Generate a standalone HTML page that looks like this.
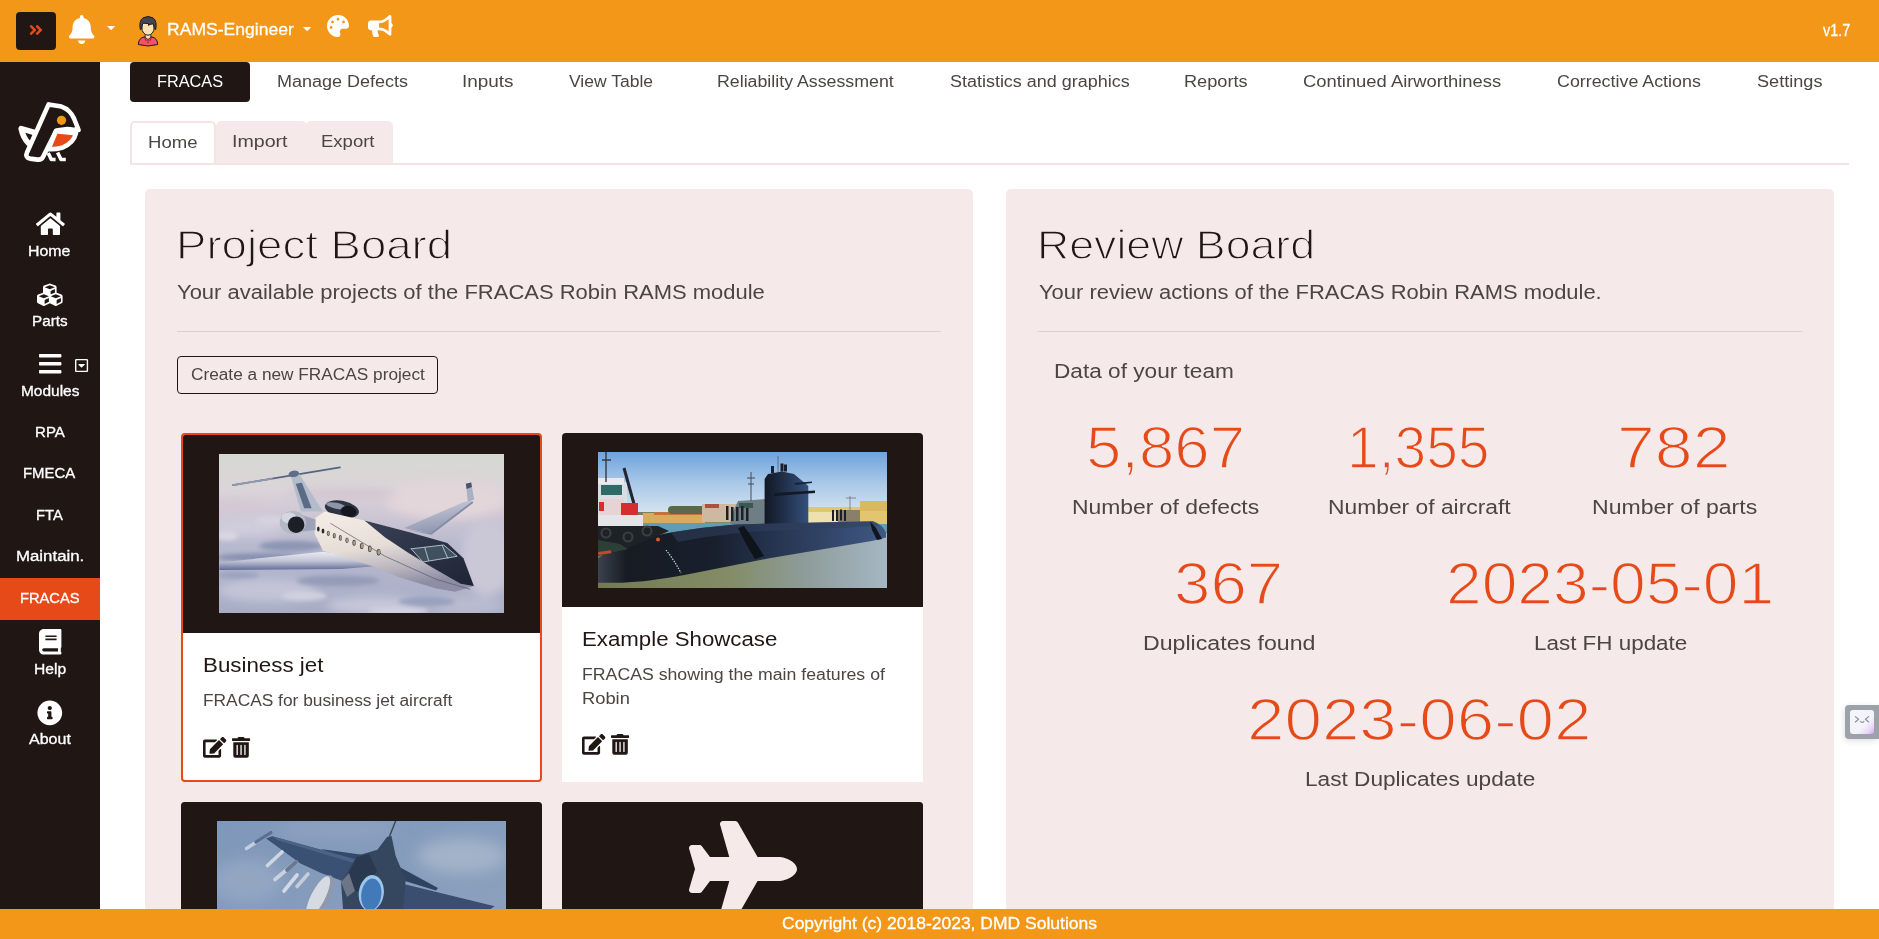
<!DOCTYPE html><html><head><meta charset="utf-8"><title>Robin RAMS - FRACAS</title><style>

html,body{margin:0;padding:0;}
body{width:1879px;height:939px;overflow:hidden;position:relative;background:#fff;font-family:"Liberation Sans",sans-serif;}
.t{position:absolute;white-space:nowrap;line-height:1;transform-origin:0 0;display:block;}
.b{position:absolute;box-sizing:border-box;}
svg{display:block;overflow:visible}

</style></head><body>
<div class="b" style="left:130px;top:62px;width:120px;height:39.7px;background:#201613;border-radius:4px"></div>
<span class="t" id="t0" style="left:156.88px;top:74.00px;font-size:16px;color:#fff;font-weight:400;transform:scaleX(1.0186)">FRACAS</span>
<span class="t" id="t1" style="left:276.68px;top:74.00px;font-size:16px;color:#4b4543;font-weight:400;transform:scaleX(1.1246)">Manage Defects</span>
<span class="t" id="t2" style="left:462.22px;top:74.00px;font-size:16px;color:#4b4543;font-weight:400;transform:scaleX(1.1835)">Inputs</span>
<span class="t" id="t3" style="left:569.00px;top:74.00px;font-size:16px;color:#4b4543;font-weight:400;transform:scaleX(1.0947)">View Table</span>
<span class="t" id="t4" style="left:716.79px;top:74.00px;font-size:16px;color:#4b4543;font-weight:400;transform:scaleX(1.1102)">Reliability Assessment</span>
<span class="t" id="t5" style="left:950.30px;top:74.00px;font-size:16px;color:#4b4543;font-weight:400;transform:scaleX(1.1220)">Statistics and graphics</span>
<span class="t" id="t6" style="left:1183.96px;top:74.00px;font-size:16px;color:#4b4543;font-weight:400;transform:scaleX(1.1359)">Reports</span>
<span class="t" id="t7" style="left:1302.50px;top:74.00px;font-size:16px;color:#4b4543;font-weight:400;transform:scaleX(1.1486)">Continued Airworthiness</span>
<span class="t" id="t8" style="left:1556.50px;top:74.00px;font-size:16px;color:#4b4543;font-weight:400;transform:scaleX(1.1154)">Corrective Actions</span>
<span class="t" id="t9" style="left:1756.50px;top:74.00px;font-size:16px;color:#4b4543;font-weight:400;transform:scaleX(1.1330)">Settings</span>
<div class="b" style="left:215.5px;top:121px;width:91px;height:42px;background:#F5E9E9;border-radius:5px 5px 0 0"></div>
<div class="b" style="left:306px;top:121px;width:87px;height:42px;background:#F5E9E9;border-radius:5px 5px 0 0"></div>
<div class="b" style="left:130px;top:121px;width:85.5px;height:44px;background:#fff;border:2px solid #F6E4E4;border-radius:5px 5px 0 0"></div>
<div class="b" style="left:130px;top:163px;width:1719px;height:2px;background:#F6E4E4"></div>
<span class="t" id="t10" style="left:147.84px;top:135.00px;font-size:16px;color:#4b4543;font-weight:400;transform:scaleX(1.1584)">Home</span>
<span class="t" id="t11" style="left:231.78px;top:134.00px;font-size:16px;color:#4b4543;font-weight:400;transform:scaleX(1.2250)">Import</span>
<span class="t" id="t12" style="left:320.84px;top:134.00px;font-size:16px;color:#4b4543;font-weight:400;transform:scaleX(1.1573)">Export</span>
<div class="b" style="left:145px;top:189px;width:828px;height:720px;background:#F5E9E9;border-radius:5px 5px 0 0"></div>
<div class="b" style="left:1006px;top:189px;width:828px;height:720px;background:#F5E9E9;border-radius:5px 5px 0 0"></div>
<span class="t" id="t13" style="left:176.00px;top:225.00px;font-size:40px;color:#201613;font-weight:400;-webkit-text-stroke:1.3px #F5E9E9;transform:scaleX(1.1395)">Project Board</span>
<span class="t" id="t14" style="left:177.30px;top:282.00px;font-size:20px;color:#4b4543;font-weight:400;transform:scaleX(1.0986)">Your available projects of the FRACAS Robin RAMS module</span>
<div class="b" style="left:177px;top:331px;width:764px;height:1px;background:#dcd0d0"></div>
<div class="b" style="left:177px;top:356px;width:261px;height:37.5px;border:1px solid #201613;border-radius:4px"></div>
<span class="t" id="t15" style="left:190.50px;top:367.00px;font-size:16px;color:#4b4543;font-weight:400;transform:scaleX(1.0775)">Create a new FRACAS project</span>
<div class="b" style="left:181px;top:433px;width:361px;height:349px;background:#fff;border:2px solid #E64A19;border-radius:4px;overflow:hidden"><div class="b" style="left:0;top:0;width:357px;height:198px;background:#201613"></div></div>
<div class="b" style="left:219px;top:454px;width:285px;height:159px;overflow:hidden"><svg width="285" height="159" viewBox="0 0 285 159"><defs><linearGradient id="jsky" x1="0" y1="0" x2="0" y2="1"><stop offset="0" stop-color="#d6d9d3"/><stop offset=".22" stop-color="#dbd4d8"/><stop offset=".38" stop-color="#cfc7d4"/><stop offset=".58" stop-color="#b7b9ce"/><stop offset="1" stop-color="#a8adc6"/></linearGradient><linearGradient id="jfus" x1="0" y1="0" x2=".3" y2="1"><stop offset="0" stop-color="#f6eee6"/><stop offset=".5" stop-color="#e6ddd7"/><stop offset=".8" stop-color="#b7b2bd"/><stop offset="1" stop-color="#8d8da5"/></linearGradient><linearGradient id="jwing" x1="0" y1="0" x2="0" y2="1"><stop offset="0" stop-color="#eceaf2"/><stop offset=".5" stop-color="#c3c5d6"/><stop offset="1" stop-color="#636e98"/></linearGradient><linearGradient id="jrw" x1="0" y1="0" x2=".3" y2="1"><stop offset="0" stop-color="#cfd0dc"/><stop offset="1" stop-color="#9097b1"/></linearGradient><linearGradient id="jnavy" x1="0" y1="0" x2="1" y2="1"><stop offset="0" stop-color="#3a4156"/><stop offset="1" stop-color="#1f2435"/></linearGradient><filter id="jb6" x="-40%" y="-40%" width="180%" height="180%"><feGaussianBlur stdDeviation="5"/></filter><filter id="jb2" x="-40%" y="-40%" width="180%" height="180%"><feGaussianBlur stdDeviation="2.2"/></filter></defs><rect width="285" height="159" fill="url(#jsky)"/><g filter="url(#jb6)"><ellipse cx="226.5" cy="45.8" rx="60.3" ry="18.8" fill="#e3d6da"/><ellipse cx="15.5" cy="53.3" rx="28.3" ry="5.7" fill="#d4c7d3"/><ellipse cx="122.9" cy="40.1" rx="56.5" ry="5.7" fill="#d3c6d2"/><ellipse cx="28.6" cy="72.2" rx="35.8" ry="9.4" fill="#d0cddc"/><ellipse cx="268.0" cy="104.2" rx="26.4" ry="37.7" fill="#cac7d7"/><ellipse cx="47.5" cy="136.3" rx="49.0" ry="11.3" fill="#c3c5d7"/><ellipse cx="156.8" cy="151.3" rx="49.0" ry="8.5" fill="#c6c8d9"/><ellipse cx="245.4" cy="151.3" rx="37.7" ry="9.4" fill="#b9bccf"/></g><g filter="url(#jb2)"><ellipse cx="72.0" cy="92.0" rx="32.0" ry="5.3" fill="#8d96b4"/><ellipse cx="40.0" cy="103.3" rx="43.3" ry="4.1" fill="#8791b0"/><ellipse cx="119.1" cy="126.8" rx="41.5" ry="5.3" fill="#949bb8"/><ellipse cx="207.7" cy="147.6" rx="28.3" ry="4.9" fill="#9aa1bd"/><ellipse cx="19.2" cy="121.2" rx="20.7" ry="3.4" fill="#9aa1bd"/><ellipse cx="7.9" cy="81.6" rx="11.3" ry="4.7" fill="#dad6e2"/><ellipse cx="53.1" cy="66.5" rx="17.0" ry="4.7" fill="#d6d2df"/><ellipse cx="85.2" cy="141.9" rx="22.6" ry="4.7" fill="#d0d1df"/><ellipse cx="179.4" cy="157.0" rx="30.2" ry="3.8" fill="#d2d3e0"/></g><polygon points="185.1,74.1 245.4,47.7 253.3,47.3 210.5,79.2" fill="url(#jrw)"/><polygon points="187.0,75.4 210.5,79.2 253.3,47.3 254.4,48.8 212.4,80.7" fill="#858ca8"/><polygon points="246.9,29.8 252.2,28.5 255.2,45.4 248.8,48.1" fill="#aab1c5"/><polygon points="246.9,29.8 252.2,28.5 252.9,33.0 247.6,34.9" fill="#48546e"/><path d="M13.9,31.1 L121.0,13.4" stroke="#56647e" stroke-width="1.6" fill="none" stroke-linecap="round"/><path d="M13.9,31.1 L53.1,24.7" stroke="#8e9ab0" stroke-width="1.6" fill="none" stroke-linecap="round"/><polygon points="71.6,21.3 79.9,19.4 104.0,57.5 81.8,57.5" fill="#b3bccb"/><polygon points="76.7,29.8 82.9,28.8 92.7,54.3 85.2,54.3" fill="#5b6a85"/><ellipse cx="74.8" cy="19.8" rx="5.3" ry="3.2" fill="#5f6e86" transform="rotate(-10 74.8 19.8)"/><ellipse cx="122.9" cy="55.2" rx="17.3" ry="8.3" fill="#2e3342" transform="rotate(12 122.9 55.2)"/><ellipse cx="117.2" cy="51.8" rx="10.4" ry="3.0" fill="#8d95a8" transform="rotate(12 117.2 51.8)"/><ellipse cx="129.5" cy="57.5" rx="7.9" ry="5.7" fill="#15171f" transform="rotate(12 129.5 57.5)"/><polygon points="0.4,108.4 104.0,97.8 134.2,101.4 160.6,111.8 122.9,115.0 0.4,115.9" fill="url(#jwing)"/><polygon points="96.5,63.7 105.9,57.5 145.5,66.5 190.7,78.2 228.4,89.1 244.4,104.2 254.8,132.1 236.0,137.8 217.1,134.4 179.4,123.1 154.9,112.7 122.9,102.3 104.0,96.7 95.6,79.7" fill="url(#jfus)"/><polygon points="145.5,66.5 190.7,78.2 228.4,89.1 244.4,104.2 254.8,132.1 241.6,129.7 213.3,113.6 188.8,98.6 166.2,83.5" fill="url(#jnavy)"/><polygon points="192.2,94.8 224.7,91.0 238.2,102.3 203.9,108.0" fill="#41505f"/><path d="M192.2,94.8 L224.7,91.0 L238.2,102.3 L203.9,108.0 L192.2,94.8" stroke="#b9c9d2" stroke-width="0.9" fill="none" stroke-linecap="round"/><path d="M205.8,93.5 L209.6,106.5" stroke="#b9c9d2" stroke-width="0.9" fill="none" stroke-linecap="round"/><path d="M223.1,91.4 L228.8,104.2" stroke="#b9c9d2" stroke-width="0.9" fill="none" stroke-linecap="round"/><path d="M111.6,69.4 L166.2,102.3 L217.1,125.3 L251.0,135.3" stroke="#5f5c66" stroke-width="0.7" fill="none" stroke-linecap="round"/><polygon points="79.5,59.9 96.5,65.6 96.5,76.0 81.4,77.8" fill="#9da3b6"/><ellipse cx="73.9" cy="68.4" rx="13.2" ry="11.3" fill="#b4b9c8"/><ellipse cx="70.1" cy="63.7" rx="7.5" ry="5.3" fill="#d5d7e0"/><ellipse cx="77.1" cy="70.7" rx="8.3" ry="8.3" fill="#1d1f28"/><ellipse cx="99.3" cy="75.0" rx="1.3" ry="2.5" fill="#26262c"/><ellipse cx="104.0" cy="76.9" rx="1.4" ry="2.5" fill="#26262c"/><ellipse cx="109.3" cy="79.3" rx="1.5" ry="2.6" fill="#3b3a3e"/><ellipse cx="109.5" cy="79.3" rx="1.1" ry="2.0" fill="#a39d84"/><ellipse cx="115.3" cy="81.6" rx="1.5" ry="2.7" fill="#3b3a3e"/><ellipse cx="115.5" cy="81.6" rx="1.1" ry="2.1" fill="#a39d84"/><ellipse cx="121.4" cy="83.9" rx="1.6" ry="2.8" fill="#3b3a3e"/><ellipse cx="121.6" cy="83.9" rx="1.2" ry="2.2" fill="#a39d84"/><ellipse cx="128.0" cy="86.3" rx="1.6" ry="2.9" fill="#3b3a3e"/><ellipse cx="128.2" cy="86.3" rx="1.2" ry="2.3" fill="#a39d84"/><ellipse cx="135.1" cy="88.8" rx="1.7" ry="3.0" fill="#3b3a3e"/><ellipse cx="135.3" cy="88.8" rx="1.3" ry="2.3" fill="#a39d84"/><ellipse cx="142.7" cy="92.0" rx="1.8" ry="3.1" fill="#3b3a3e"/><ellipse cx="142.9" cy="92.0" rx="1.3" ry="2.4" fill="#a39d84"/><ellipse cx="150.8" cy="94.8" rx="1.8" ry="3.2" fill="#3b3a3e"/><ellipse cx="151.0" cy="94.8" rx="1.4" ry="2.5" fill="#a39d84"/><ellipse cx="159.6" cy="98.2" rx="1.9" ry="3.3" fill="#3b3a3e"/><ellipse cx="159.8" cy="98.2" rx="1.5" ry="2.6" fill="#a39d84"/></svg></div>
<span class="t" id="t16" style="left:203.08px;top:655.00px;font-size:20px;color:#201613;font-weight:400;transform:scaleX(1.1168)">Business jet</span>
<span class="t" id="t17" style="left:202.72px;top:693.00px;font-size:16px;color:#4b4543;font-weight:400;transform:scaleX(1.0829)">FRACAS for business jet aircraft</span>
<svg style="position:absolute;left:203.2px;top:736.6px;" width="23.29" height="20.70" viewBox="0 0 576 512"><path fill="#201613" d="M402.600 83.200l90.200 90.200c3.800 3.800 3.800 10 0 13.800L274.400 405.600l-92.800 10.300c-12.400 1.400-22.900-9.100-21.500-21.500l10.300-92.800L388.800 83.200c3.800-3.800 10-3.800 13.800 0zm162-22.900l-48.800-48.800c-15.200-15.200-39.900-15.200-55.200 0l-35.400 35.400c-3.800 3.800-3.800 10 0 13.800l90.200 90.200c3.800 3.800 10 3.800 13.800 0l35.400-35.400c15.200-15.300 15.200-40 0-55.200zM384 346.200V448H64V128h229.800c3.200 0 6.200-1.300 8.500-3.500l40-40c7.600-7.600 2.200-20.500-8.500-20.500H48C21.500 64 0 85.500 0 112v352c0 26.500 21.500 48 48 48h352c26.500 0 48-21.500 48-48V306.200c0-10.700-12.900-16-20.500-8.500l-40 40c-2.200 2.300-3.500 5.300-3.500 8.500z"/></svg>
<svg style="position:absolute;left:231.6px;top:736.6px;" width="18.11" height="20.70" viewBox="0 0 448 512"><path fill="#201613" d="M32 464a48 48 0 0 0 48 48h288a48 48 0 0 0 48-48V128H32zm272-256a16 16 0 0 1 32 0v224a16 16 0 0 1-32 0zm-96 0a16 16 0 0 1 32 0v224a16 16 0 0 1-32 0zm-96 0a16 16 0 0 1 32 0v224a16 16 0 0 1-32 0zM432 32H312l-9.400-18.700A24 24 0 0 0 281.100 0H166.800a23.720 23.720 0 0 0-21.400 13.300L136 32H16A16 16 0 0 0 0 48v32a16 16 0 0 0 16 16h416a16 16 0 0 0 16-16V48a16 16 0 0 0-16-16z"/></svg>
<div class="b" style="left:562px;top:433px;width:361px;height:348.6px;background:#fff;border-radius:4px 4px 0 0;overflow:hidden"><div class="b" style="left:0;top:0;width:361px;height:173.6px;background:#201613"></div></div>
<div class="b" style="left:598px;top:452px;width:289px;height:136px;overflow:hidden"><svg width="289" height="136" viewBox="0 0 289 136">
<defs>
<linearGradient id="ssky" x1="0" y1="0" x2="0" y2="1"><stop offset="0" stop-color="#6ea3dd"/><stop offset=".5" stop-color="#a9c8e8"/><stop offset="1" stop-color="#d6e4ef"/></linearGradient>
<linearGradient id="swat" x1="0" y1="0" x2="1" y2="0"><stop offset="0" stop-color="#727b50"/><stop offset=".45" stop-color="#838c66"/><stop offset=".7" stop-color="#8c9b96"/><stop offset="1" stop-color="#a6b6c4"/></linearGradient>
<linearGradient id="shull" x1="0" y1="0" x2="1" y2="0"><stop offset="0" stop-color="#3b434f"/><stop offset=".1" stop-color="#171b23"/><stop offset=".4" stop-color="#181f2d"/><stop offset=".6" stop-color="#25334e"/><stop offset="1" stop-color="#3f5984"/></linearGradient>
<linearGradient id="ssail" x1="0" y1="0" x2="1" y2="0"><stop offset="0" stop-color="#121824"/><stop offset=".35" stop-color="#1d2a42"/><stop offset="1" stop-color="#35507c"/></linearGradient>
</defs>
<rect width="289" height="62" fill="url(#ssky)"/>
<rect y="60" width="289" height="76" fill="url(#swat)"/>
<rect x="40" y="71" width="249" height="10" fill="#629bb4"/>
<rect x="45" y="61" width="62" height="10" fill="#d9ab5c"/><rect x="56" y="60" width="48" height="3" fill="#c96f3c"/>
<rect x="70" y="54" width="52" height="8" rx="4" fill="#5a6a46"/>
<rect x="104" y="52" width="40" height="18" fill="#cdb9a2"/><rect x="107" y="52" width="14" height="4" fill="#a5553b"/>
<rect x="208" y="55" width="81" height="17" fill="#e3c56f"/><rect x="208" y="60" width="40" height="12" fill="#efe0b0"/><rect x="262" y="49" width="27" height="10" fill="#d9b860"/>
<rect x="240" y="58" width="22" height="14" fill="#8a7f6a"/>
<path d="M252,44 v14 M248,46 h10" stroke="#667" stroke-width=".7"/>
<polygon points="140,49 168,47 168,72 132,72 134,62" fill="#6e7e84"/><rect x="141" y="51" width="14" height="5" fill="#39584f"/>
<path d="M153,20 v29 M149,26 h8 M150,32 h6" stroke="#444c55" stroke-width="1"/>
<polygon points="166.600,72 166.600,27 170,22 184,19.500 196,22 210.300,34 210.300,72" fill="url(#ssail)"/>
<polygon points="176,41 217,38.500 217,41 176,44" fill="#121927"/><polygon points="196,31 214,29.500 214,31 198,33" fill="#1a2436"/>
<path d="M180,4 v16" stroke="#444" stroke-width=".6"/>
<g fill="#1c1f28"><rect x="173" y="14" width="3" height="7"/><rect x="182.500" y="11.500" width="3" height="8"/><rect x="186" y="12.500" width="3" height="7"/><rect x="128" y="54" width="2.500" height="14"/><rect x="133" y="55" width="2.500" height="14"/><rect x="138" y="55" width="2.500" height="14"/><rect x="143" y="54" width="2.500" height="14"/><rect x="148" y="56" width="2.500" height="13"/><rect x="234" y="58" width="2" height="11"/><rect x="238" y="58" width="2" height="11"/><rect x="242" y="57.500" width="2" height="11"/><rect x="246" y="58" width="2" height="11"/></g>
<path d="M0,106.500 Q10,98 24,93.500 Q48,85 72.800,80.600 Q105,75 137.500,72.500 L275,69.200 Q284,72 288,80.600 L288,85.400 L275,88.700 L170,106.500 L89,122.600 Q50,130 24,130.700 L0,130.700 Z" fill="url(#shull)"/>
<path d="M72.800,80.600 Q105,75 137.500,72.500 L275,69.200 L280,74 L150,80 Q110,84 80,90Z" fill="#2f3f5c" opacity=".55"/>
<path d="M146,74 L157,90 L166,104 L157,107 L148,92 L140,76Z" fill="#0f131b"/>
<path d="M272,69.500 L278,76 L284,87 L279,88 L274,78Z" fill="#10151e"/>
<path d="M68,98 Q76,108 83,121" stroke="#c9cdd6" stroke-width="1.200" stroke-dasharray="1.500 1.200" fill="none"/>
<rect x="0" y="30" width="29" height="44" fill="#dcdde2"/><rect x="0" y="26" width="26" height="6" fill="#e8e9ec"/>
<rect x="3" y="33" width="21" height="10" fill="#2f6a68"/>
<rect x="2" y="47" width="24" height="22" fill="#e6d3d6"/>
<path d="M8,0 v30 M4,8 h9" stroke="#333a44" stroke-width="1.400"/>
<path d="M26,16 L36,52" stroke="#22262e" stroke-width="3"/>
<rect x="23" y="51" width="17" height="12" fill="#d42e2e"/><rect x="1" y="50" width="5" height="9" fill="#d42e2e"/>
<rect x="0" y="63" width="45" height="12" fill="#e4e5e8"/>
<path d="M0,74 L60,74 L71,79 L40,92 L20,100 L0,103Z" fill="#1d2226"/>
<path d="M0,88 L22,92 L30,97 L0,104Z" fill="#2c3f37"/>
<rect x="0" y="100" width="13" height="3" fill="#c9452e" transform="rotate(-8 0 100)"/>
<g fill="none" stroke="#3a3e44" stroke-width="2.200"><circle cx="8" cy="81" r="4.500"/><circle cx="30" cy="85" r="4.500"/><circle cx="49" cy="79" r="4.500"/></g>
<circle cx="60" cy="87.500" r="2" fill="#e0552c"/>
</svg></div>
<span class="t" id="t18" style="left:582.09px;top:629.00px;font-size:20px;color:#201613;font-weight:400;transform:scaleX(1.1122)">Example Showcase</span>
<span class="t" id="t19" style="left:582.09px;top:667.00px;font-size:16px;color:#4b4543;font-weight:400;transform:scaleX(1.1058)">FRACAS showing the main features of</span>
<span class="t" id="t20" style="left:582.05px;top:691.00px;font-size:16px;color:#4b4543;font-weight:400;transform:scaleX(1.1452)">Robin</span>
<svg style="position:absolute;left:582.2px;top:733.9px;" width="23.29" height="20.70" viewBox="0 0 576 512"><path fill="#201613" d="M402.600 83.200l90.200 90.200c3.800 3.800 3.800 10 0 13.800L274.400 405.600l-92.800 10.300c-12.400 1.400-22.900-9.100-21.500-21.500l10.300-92.800L388.800 83.200c3.800-3.800 10-3.800 13.800 0zm162-22.900l-48.800-48.800c-15.200-15.200-39.900-15.200-55.200 0l-35.400 35.400c-3.800 3.800-3.800 10 0 13.800l90.200 90.200c3.800 3.800 10 3.800 13.800 0l35.400-35.400c15.200-15.300 15.200-40 0-55.200zM384 346.200V448H64V128h229.800c3.200 0 6.200-1.300 8.500-3.500l40-40c7.600-7.600 2.200-20.500-8.500-20.500H48C21.500 64 0 85.500 0 112v352c0 26.500 21.500 48 48 48h352c26.500 0 48-21.500 48-48V306.200c0-10.700-12.900-16-20.500-8.500l-40 40c-2.200 2.300-3.500 5.300-3.500 8.500z"/></svg>
<svg style="position:absolute;left:610.6px;top:733.9px;" width="18.11" height="20.70" viewBox="0 0 448 512"><path fill="#201613" d="M32 464a48 48 0 0 0 48 48h288a48 48 0 0 0 48-48V128H32zm272-256a16 16 0 0 1 32 0v224a16 16 0 0 1-32 0zm-96 0a16 16 0 0 1 32 0v224a16 16 0 0 1-32 0zm-96 0a16 16 0 0 1 32 0v224a16 16 0 0 1-32 0zM432 32H312l-9.400-18.700A24 24 0 0 0 281.100 0H166.800a23.720 23.720 0 0 0-21.400 13.300L136 32H16A16 16 0 0 0 0 48v32a16 16 0 0 0 16 16h416a16 16 0 0 0 16-16V48a16 16 0 0 0-16-16z"/></svg>
<div class="b" style="left:181px;top:802px;width:361px;height:107px;background:#201613;border-radius:3.5px 3.5px 0 0"></div>
<div class="b" style="left:217px;top:821px;width:289px;height:88px;overflow:hidden"><svg width="289" height="163" viewBox="0 0 289 163">
<defs><linearGradient id="fsky" x1="0" y1="0" x2="1" y2="1"><stop offset="0" stop-color="#7f97ba"/><stop offset=".5" stop-color="#869dbc"/><stop offset="1" stop-color="#90a3bd"/></linearGradient>
<filter id="fb" x="-30%" y="-30%" width="160%" height="160%"><feGaussianBlur stdDeviation="7"/></filter></defs>
<rect width="289" height="163" fill="url(#fsky)"/>
<g filter="url(#fb)"><ellipse cx="245" cy="35" rx="45" ry="18" fill="#a2b2c9"/><ellipse cx="30" cy="60" rx="35" ry="22" fill="#92a6c2"/><ellipse cx="120" cy="8" rx="60" ry="10" fill="#8ea2c0"/></g>
<path d="M178.600,0 L170.500,20.600" stroke="#3a4455" stroke-width="1.400"/>
<polygon points="103.700,28 152.300,34.800 136.100,41.500" fill="#33486a"/>
<polygon points="49.100,17.600 55.200,15.200 140.100,38.800 128,61 104,52 83.500,42.500" fill="#3b5173"/>
<polygon points="55.200,15.200 140.100,38.800 137,42 60,19" fill="#4b6386"/>
<polygon points="180.600,44.900 221,67.100 219,69.500 184.600,59" fill="#2f425f"/>
<polygon points="186.700,63.100 277.700,85.300 273.600,88 180.600,88" fill="#3a4f70"/>
<polygon points="170,16 174.500,15 178.600,34.800 188.700,59 186,88 126,88 124,61 140.100,34.800 160.400,28.700" fill="#35475f"/>
<polygon points="140.100,36 152,33 160,50 148,68 132,72 126,62" fill="#2a3950"/>
<polygon points="124,61 132,52 138,70 130,76" fill="#6d7686"/>
<ellipse cx="154.300" cy="72" rx="12.500" ry="18" fill="#9cc6ec" transform="rotate(8 154.300 72)"/>
<ellipse cx="154.300" cy="73.500" rx="10" ry="16" fill="#4279b8" transform="rotate(8 154.300 73.500)"/>
<g stroke-linecap="round" fill="none"><path d="M29.500,27.500 L54,11.500" stroke="#c3cede" stroke-width="3.400"/><path d="M39,21 L54,11.500" stroke="#5a6f92" stroke-width="3.400"/>
<path d="M50.500,44.500 L65,31" stroke="#cfd6e2" stroke-width="3.600"/>
<path d="M58,58.500 L79,41" stroke="#c9d0de" stroke-width="3.800"/><path d="M70,49 L79,41" stroke="#6b7890" stroke-width="3.800"/>
<path d="M67,70 L80,54" stroke="#d3d9e4" stroke-width="3.600"/>
<path d="M80,65.500 L91,53" stroke="#c5ccd9" stroke-width="3.600"/></g>
<ellipse cx="103" cy="76" rx="9.500" ry="24" fill="#8f99aa" transform="rotate(27 103 76)"/>
<ellipse cx="101" cy="76" rx="7" ry="23" fill="#d6dae2" transform="rotate(27 101 76)"/>
</svg></div>
<div class="b" style="left:562px;top:802px;width:361px;height:107px;background:#201613;border-radius:3.5px 3.5px 0 0"></div>
<div class="b" style="left:562px;top:802px;width:361px;height:107px;overflow:hidden"><svg style="position:absolute;left:127px;top:18.6px;" width="108.00" height="96.00" viewBox="0 0 576 512"><path fill="#F5E9E9" d="M480 192H365.71L260.61 8.06A16.014 16.014 0 0 0 246.71 0h-65.5c-10.63 0-18.3 10.17-15.38 20.39L214.86 192H112l-43.2-57.6c-3.02-4.03-7.77-6.4-12.8-6.4H16.01C5.6 128-2.04 137.78.49 147.88L32 256 .49 364.12C-2.04 374.22 5.6 384 16.01 384H56c5.04 0 9.78-2.37 12.8-6.4L112 320h102.86l-49.03 171.6c-2.92 10.22 4.75 20.4 15.38 20.4h65.5c5.74 0 11.04-3.08 13.89-8.06L365.71 320H480c35.35 0 96-28.650 96-64s-60.650-64-96-64z"/></svg></div>
<span class="t" id="t21" style="left:1037.07px;top:225.00px;font-size:40px;color:#201613;font-weight:400;-webkit-text-stroke:1.3px #F5E9E9;transform:scaleX(1.1166)">Review Board</span>
<span class="t" id="t22" style="left:1039.00px;top:282.00px;font-size:20px;color:#4b4543;font-weight:400;transform:scaleX(1.0973)">Your review actions of the FRACAS Robin RAMS module.</span>
<div class="b" style="left:1038px;top:331px;width:764px;height:1px;background:#dcd0d0"></div>
<span class="t" id="t23" style="left:1053.87px;top:361.00px;font-size:20px;color:#4b4543;font-weight:400;transform:scaleX(1.1316)">Data of your team</span>
<span class="t" id="t24" style="left:1086.16px;top:418.00px;font-size:60px;color:#E64A19;font-weight:400;-webkit-text-stroke:1.6px #F5E9E9;transform:scaleX(1.0594)">5,867</span>
<span class="t" id="t25" style="left:1347.48px;top:418.00px;font-size:60px;color:#E64A19;font-weight:400;-webkit-text-stroke:1.6px #F5E9E9;transform:scaleX(0.9490)">1,355</span>
<span class="t" id="t26" style="left:1616.88px;top:418.00px;font-size:60px;color:#E64A19;font-weight:400;-webkit-text-stroke:1.6px #F5E9E9;transform:scaleX(1.1341)">782</span>
<span class="t" id="t27" style="left:1174.10px;top:554.00px;font-size:60px;color:#E64A19;font-weight:400;-webkit-text-stroke:1.6px #F5E9E9;transform:scaleX(1.0909)">367</span>
<span class="t" id="t28" style="left:1446.07px;top:554.00px;font-size:60px;color:#E64A19;font-weight:400;-webkit-text-stroke:1.6px #F5E9E9;transform:scaleX(1.0693)">2023-05-01</span>
<span class="t" id="t29" style="left:1246.91px;top:690.00px;font-size:60px;color:#E64A19;font-weight:400;-webkit-text-stroke:1.6px #F5E9E9;transform:scaleX(1.1224)">2023-06-02</span>
<span class="t" id="t30" style="left:1071.85px;top:497.00px;font-size:20px;color:#4b4543;font-weight:400;transform:scaleX(1.1453)">Number of defects</span>
<span class="t" id="t31" style="left:1327.86px;top:497.00px;font-size:20px;color:#4b4543;font-weight:400;transform:scaleX(1.1411)">Number of aircraft</span>
<span class="t" id="t32" style="left:1591.85px;top:497.00px;font-size:20px;color:#4b4543;font-weight:400;transform:scaleX(1.1518)">Number of parts</span>
<span class="t" id="t33" style="left:1142.84px;top:633.00px;font-size:20px;color:#4b4543;font-weight:400;transform:scaleX(1.1576)">Duplicates found</span>
<span class="t" id="t34" style="left:1533.88px;top:633.00px;font-size:20px;color:#4b4543;font-weight:400;transform:scaleX(1.1207)">Last FH update</span>
<span class="t" id="t35" style="left:1304.87px;top:769.00px;font-size:20px;color:#4b4543;font-weight:400;transform:scaleX(1.1317)">Last Duplicates update</span>
<div class="b" style="left:1845px;top:705px;width:34px;height:34px;background:#9DA1AA;border-radius:4px 0 0 4px;box-shadow:-1px 2px 6px rgba(0,0,0,.12)"></div>
<div class="b" style="left:1850px;top:710px;width:24.3px;height:24.2px;border-radius:3px;background:linear-gradient(135deg,#f4f6fa 0%,#f3f3f9 62%,#ead8f6 82%,#d3a2ee 100%)"></div>
<svg style="position:absolute;left:1850px;top:710px" width="25" height="25" viewBox="0 0 25 25"><path d="M5.300,6.600 L8.600,9.300 L5.300,12 M18.700,6.600 L15.400,9.300 L18.700,12 M10.500,11.400 Q12.200,13.600 13.900,11.400" fill="none" stroke="#8b8f99" stroke-width="1.1" stroke-linecap="round" stroke-linejoin="round"/></svg>
<div class="b" style="left:0;top:0;width:1879px;height:62px;background:#F39719"></div>
<div class="b" style="left:16px;top:12px;width:40px;height:38px;background:#201613;border-radius:4px"></div>
<svg style="position:absolute;left:29px;top:22px;" width="14.00" height="16.00" viewBox="0 0 448 512"><path fill="#E64A19" d="M224.300 273l-136 136c-9.400 9.400-24.600 9.400-33.900 0l-22.600-22.600c-9.400-9.400-9.400-24.600 0-33.900l96.400-96.400-96.400-96.400c-9.400-9.400-9.400-24.600 0-33.900L54.300 103c9.400-9.400 24.600-9.400 33.900 0l136 136c9.500 9.400 9.500 24.600.1 34zm192-34l-136-136c-9.400-9.400-24.600-9.400-33.900 0l-22.600 22.600c-9.400 9.400-9.400 24.600 0 33.900l96.400 96.400-96.400 96.400c-9.400 9.400-9.400 24.600 0 33.900l22.600 22.600c9.400 9.400 24.600 9.400 33.900 0l136-136c9.400-9.200 9.400-24.400 0-33.800z"/></svg>
<svg style="position:absolute;left:69px;top:15px;" width="25.38" height="29.00" viewBox="0 0 448 512"><path fill="#fff" d="M224 512c35.320 0 63.970-28.650 63.970-64H160.030c0 35.350 28.650 64 63.970 64zm215.390-149.710c-19.320-20.760-55.470-51.990-55.470-154.290 0-77.700-54.480-139.900-127.940-155.160V32c0-17.670-14.320-32-31.980-32s-31.980 14.330-31.980 32v20.840C118.560 68.100 64.080 130.300 64.080 208c0 102.300-36.150 133.530-55.470 154.290-6 6.450-8.660 14.160-8.610 21.710.11 16.400 12.980 32 32.100 32h383.800c19.120 0 32-15.600 32.100-32 .05-7.550-2.610-15.270-8.610-21.710z"/></svg>
<svg style="position:absolute;left:107px;top:26px" width="8.2" height="4.3" viewBox="0 0 8.2 4.3"><path d="M0,0 H8.2 L4.1,4.300Z" fill="#fff"/></svg>
<svg style="position:absolute;left:136px;top:14px" width="24" height="33" viewBox="0 0 24 33">
<path d="M2.3,30.5 Q2.3,24.2 8.5,22.8 L15.5,22.8 Q21.7,24.2 21.7,30.5 Q12,33.5 2.3,30.5Z" fill="#F4506A" stroke="#1b1b1f" stroke-width="1"/>
<path d="M9.2,19.5 L9.2,23.2 L12,25.6 L14.8,23.2 L14.8,19.5Z" fill="#FFE0B2" stroke="#1b1b1f" stroke-width="0.8"/>
<path d="M8.2,22.8 L10.2,27 M15.8,22.8 L13.8,27 M12,25.6 L12,29" stroke="#7a1f2e" stroke-width="0.9" fill="none"/>
<ellipse cx="12" cy="13.6" rx="6.2" ry="7.6" fill="#FFE0B2" stroke="#1b1b1f" stroke-width="1"/>
<path d="M4.3,15.6 Q2.6,7 7,3.9 Q12,1.2 17,3.9 Q21.4,7 19.7,15.6 L18.2,14.5 L17.6,9.8 L14,10.4 L12.4,11.4 L12.6,9.6 L7.4,9.2 L6,11 L5.8,14.5Z" fill="#444652" stroke="#1b1b1f" stroke-width="1" stroke-linejoin="round"/>
</svg>
<span class="t" id="t36" style="left:167.40px;top:22.00px;font-size:16px;color:#fff;font-weight:400;-webkit-text-stroke:0.3px #fff;transform:scaleX(1.0974)">RAMS-Engineer</span>
<svg style="position:absolute;left:302.8px;top:26.7px" width="8.2" height="4.3" viewBox="0 0 8.2 4.3"><path d="M0,0 H8.2 L4.1,4.300Z" fill="#fff"/></svg>
<svg style="position:absolute;left:327px;top:15px;" width="22.00" height="22.00" viewBox="0 0 512 512"><path fill="#fff" d="M204.300 5C104.900 24.400 24.800 104.300 5.200 203.400c-37 187 131.700 326.400 258.800 306.700 41.200-6.400 61.400-54.600 42.500-91.700-23.100-45.400 9.900-98.400 60.900-98.400h79.700c35.800 0 64.800-29.600 64.900-65.300C511.500 97.100 368.100-26.900 204.300 5zM96 320c-17.700 0-32-14.300-32-32s14.300-32 32-32 32 14.300 32 32-14.300 32-32 32zm32-128c-17.700 0-32-14.300-32-32s14.300-32 32-32 32 14.300 32 32-14.300 32-32 32zm128-64c-17.700 0-32-14.300-32-32s14.300-32 32-32 32 14.300 32 32-14.300 32-32 32zm128 64c-17.700 0-32-14.300-32-32s14.300-32 32-32 32 14.300 32 32-14.300 32-32 32z"/></svg>
<svg style="position:absolute;left:368px;top:15px;" width="24.75" height="22.00" viewBox="0 0 576 512"><path fill="#fff" d="M576 240c0-23.630-12.950-44.040-32-55.120V32.010C544 23.260 537.020 0 512 0c-7.120 0-14.190 2.380-19.980 7.020l-85.030 68.030C364.280 109.190 310.660 128 256 128H64c-35.350 0-64 28.650-64 64v96c0 35.350 28.650 64 64 64h33.700c-1.390 10.480-2.180 21.140-2.180 32 0 39.770 9.260 77.350 25.560 110.940 5.190 10.690 16.520 17.060 28.400 17.060h74.280c26.050 0 41.690-29.840 25.900-50.560-16.400-21.520-26.150-48.360-26.150-77.440 0-11.110 1.620-21.790 4.410-32H256c54.660 0 108.280 18.810 150.980 52.950l85.030 68.030a32.023 32.023 0 0 0 19.980 7.020c24.920 0 32-22.780 32-32V295.130C563.050 284.040 576 263.630 576 240zm-96 141.420l-33.050-26.440C392.950 311.780 325.120 288 256 288v-96c69.120 0 136.950-23.780 190.950-66.980L480 98.580v282.840z"/></svg>
<span class="t" id="t37" style="left:1823.00px;top:23.00px;font-size:16px;color:#fff;font-weight:400;-webkit-text-stroke:0.3px #fff;transform:scaleX(0.8964)">v1.7</span>
<div class="b" style="left:0;top:62px;width:100px;height:847px;background:#201613"></div>
<div class="b" style="left:0;top:90px;width:100px;height:85px"><svg width="100" height="85" viewBox="0 0 100 85">
<g fill="none" stroke="#fff" stroke-width="4.6" stroke-linejoin="round" stroke-linecap="round">
<path d="M33.5,42.2 L21.200,38.600 Q23,47.500 28.600,53.300" stroke-width="5.6"/>
<path fill="#201613" d="M48.6,14.4 L61.5,16.6 Q70,19.5 74,28.5 L78.600,40 L67.500,38.900 L56.300,40.600 L43,67 Q41.500,70 37.500,69.600 L30,68.600 Q24.800,67.300 27,62.500 Z"/>
<path fill="#E64A19" d="M56,41.200 L76,43.300 Q73.500,53.500 62,57.800 Q56,59.500 48.500,59.200 Z"/>
<path d="M48.2,63 L51.3,69.5 L55.6,69.5 M57.6,62.5 L61,69.5 L65.8,69.5" stroke-width="3.6" stroke-linecap="butt"/>
</g>
<path d="M66.800,36.500 L72.800,33.300 L74.300,37.500Z" fill="#201613"/>
<circle cx="61.5" cy="30.3" r="4.6" fill="#F39719"/>
</svg></div>
<svg style="position:absolute;left:35.6px;top:211.4px;" width="28.80" height="25.60" viewBox="0 0 576 512"><path fill="#fff" d="M280.37 148.26L96 300.11V464a16 16 0 0 0 16 16l112.06-.29a16 16 0 0 0 15.92-16V368a16 16 0 0 1 16-16h64a16 16 0 0 1 16 16v95.64a16 16 0 0 0 16 16.05L464 480a16 16 0 0 0 16-16V300L295.67 148.26a12.19 12.19 0 0 0-15.3 0zM571.6 251.47L488 182.56V44.05a12 12 0 0 0-12-12h-56a12 12 0 0 0-12 12v72.61L318.47 43a48 48 0 0 0-61 0L4.34 251.47a12 12 0 0 0-1.6 16.9l25.500 31A12 12 0 0 0 45.150 301l235.220-193.740a12.190 12.190 0 0 1 15.300 0L530.900 301a12 12 0 0 0 16.900-1.600l25.500-31a12 12 0 0 0-1.700-16.930z"/></svg>
<svg style="position:absolute;left:37.2px;top:281.6px;" width="25.60" height="25.60" viewBox="0 0 512 512"><path fill="#fff" d="M488.600 250.200L392 214V105.500c0-15-9.300-28.400-23.400-33.700l-100-37.500c-8.100-3.100-17.100-3.100-25.300 0l-100 37.500c-14.100 5.300-23.400 18.700-23.400 33.700V214l-96.600 36.200C9.300 255.500 0 268.900 0 283.900V394c0 13.600 7.700 26.100 19.900 32.200l100 50c10.100 5.100 22.100 5.100 32.200 0l103.900-52 103.900 52c10.100 5.100 22.100 5.100 32.200 0l100-50c12.200-6.100 19.900-18.600 19.900-32.200V283.900c0-15-9.300-28.400-23.400-33.700zM358 214.800l-85 31.900v-68.200l85-37v73.300zM154 104.100l102-38.200 102 38.200v.6l-102 41.400-102-41.400v-.6zm84 291.100l-85 42.500v-79.100l85-38.800v75.400zm0-112l-102 41.400-102-41.400v-.6l102-38.200 102 38.200v.6zm240 112l-85 42.500v-79.100l85-38.800v75.400zm0-112l-102 41.400-102-41.400v-.6l102-38.200 102 38.200v.6z"/></svg>
<svg style="position:absolute;left:38.6px;top:351.4px;" width="22.40" height="25.60" viewBox="0 0 448 512"><path fill="#fff" d="M16 132h416c8.837 0 16-7.163 16-16V76c0-8.837-7.163-16-16-16H16C7.163 60 0 67.163 0 76v40c0 8.837 7.163 16 16 16zm0 160h416c8.837 0 16-7.163 16-16v-40c0-8.837-7.163-16-16-16H16c-8.837 0-16 7.163-16 16v40c0 8.837 7.163 16 16 16zm0 160h416c8.837 0 16-7.163 16-16v-40c0-8.837-7.163-16-16-16H16c-8.837 0-16 7.163-16 16v40c0 8.837 7.163 16 16 16z"/></svg>
<svg style="position:absolute;left:74.6px;top:357.5px;" width="13.12" height="15.00" viewBox="0 0 448 512"><path fill="#fff" d="M125.100 208h197.800c10.700 0 16.100 13 8.500 20.500l-98.900 98.300c-4.700 4.700-12.200 4.700-16.900 0l-98.900-98.300c-7.700-7.500-2.300-20.500 8.400-20.500zM448 80v352c0 26.500-21.500 48-48 48H48c-26.500 0-48-21.500-48-48V80c0-26.500 21.500-48 48-48h352c26.500 0 48 21.500 48 48zm-48 346V86c0-3.300-2.700-6-6-6H54c-3.300 0-6 2.700-6 6v340c0 3.300 2.700 6 6 6h340c3.300 0 6-2.700 6-6z"/></svg>
<svg style="position:absolute;left:38.8px;top:629px;" width="22.40" height="25.60" viewBox="0 0 448 512"><path fill="#fff" d="M448 360V24c0-13.300-10.700-24-24-24H96C43 0 0 43 0 96v320c0 53 43 96 96 96h328c13.300 0 24-10.700 24-24v-16c0-7.500-3.500-14.300-8.900-18.700-4.200-15.400-4.200-59.300 0-74.700 5.400-4.300 8.900-11.100 8.900-18.600zM128 134c0-3.300 2.700-6 6-6h212c3.300 0 6 2.700 6 6v20c0 3.300-2.700 6-6 6H134c-3.300 0-6-2.700-6-6v-20zm0 64c0-3.300 2.700-6 6-6h212c3.300 0 6 2.700 6 6v20c0 3.300-2.700 6-6 6H134c-3.300 0-6-2.700-6-6v-20zm253.400 250H96c-17.700 0-32-14.300-32-32 0-17.600 14.400-32 32-32h285.400c-1.900 17.100-1.900 46.900 0 64z"/></svg>
<svg style="position:absolute;left:37.2px;top:699.8px;" width="25.60" height="25.60" viewBox="0 0 512 512"><path fill="#fff" d="M256 8C119.043 8 8 119.083 8 256c0 136.997 111.043 248 248 248s248-111.003 248-248C504 119.083 392.957 8 256 8zm0 110c23.196 0 42 18.804 42 42s-18.804 42-42 42-42-18.804-42-42 18.804-42 42-42zm56 254c0 6.627-5.373 12-12 12h-88c-6.627 0-12-5.373-12-12v-24c0-6.627 5.373-12 12-12h12v-64h-12c-6.627 0-12-5.373-12-12v-24c0-6.627 5.373-12 12-12h64c6.627 0 12 5.373 12 12v100h12c6.627 0 12 5.373 12 12v24z"/></svg>
<div class="b" style="left:0;top:578px;width:100px;height:42px;background:#E64A19"></div>
<span class="t" id="t38" style="left:28.36px;top:244.00px;font-size:14px;color:#fff;font-weight:400;-webkit-text-stroke:0.3px #fff;transform:scaleX(1.1352)">Home</span>
<span class="t" id="t39" style="left:31.91px;top:314.00px;font-size:14px;color:#fff;font-weight:400;-webkit-text-stroke:0.3px #fff;transform:scaleX(1.0892)">Parts</span>
<span class="t" id="t40" style="left:20.60px;top:384.00px;font-size:14px;color:#fff;font-weight:400;-webkit-text-stroke:0.3px #fff;transform:scaleX(1.1037)">Modules</span>
<span class="t" id="t41" style="left:34.72px;top:425.00px;font-size:14px;color:#fff;font-weight:400;-webkit-text-stroke:0.3px #fff;transform:scaleX(1.0763)">RPA</span>
<span class="t" id="t42" style="left:23.14px;top:466.00px;font-size:14px;color:#fff;font-weight:400;-webkit-text-stroke:0.3px #fff;transform:scaleX(1.0645)">FMECA</span>
<span class="t" id="t43" style="left:35.85px;top:508.00px;font-size:14px;color:#fff;font-weight:400;-webkit-text-stroke:0.3px #fff;transform:scaleX(1.0533)">FTA</span>
<span class="t" id="t44" style="left:16.00px;top:549.00px;font-size:14px;color:#fff;font-weight:400;-webkit-text-stroke:0.3px #fff;transform:scaleX(1.2018)">Maintain.</span>
<span class="t" id="t45" style="left:20.25px;top:591.00px;font-size:14px;color:#fff;font-weight:400;-webkit-text-stroke:0.3px #fff;transform:scaleX(1.0478)">FRACAS</span>
<span class="t" id="t46" style="left:33.58px;top:662.00px;font-size:14px;color:#fff;font-weight:400;-webkit-text-stroke:0.3px #fff;transform:scaleX(1.1176)">Help</span>
<span class="t" id="t47" style="left:29.10px;top:732.00px;font-size:14px;color:#fff;font-weight:400;-webkit-text-stroke:0.3px #fff;transform:scaleX(1.1445)">About</span>
<div class="b" style="left:0;top:909px;width:1879px;height:30px;background:#F39719"></div>
<span class="t" id="t48" style="left:782.00px;top:916.00px;font-size:16px;color:#fff;font-weight:400;-webkit-text-stroke:0.3px #fff;transform:scaleX(1.0932)">Copyright (c) 2018-2023, DMD Solutions</span>
</body></html>
